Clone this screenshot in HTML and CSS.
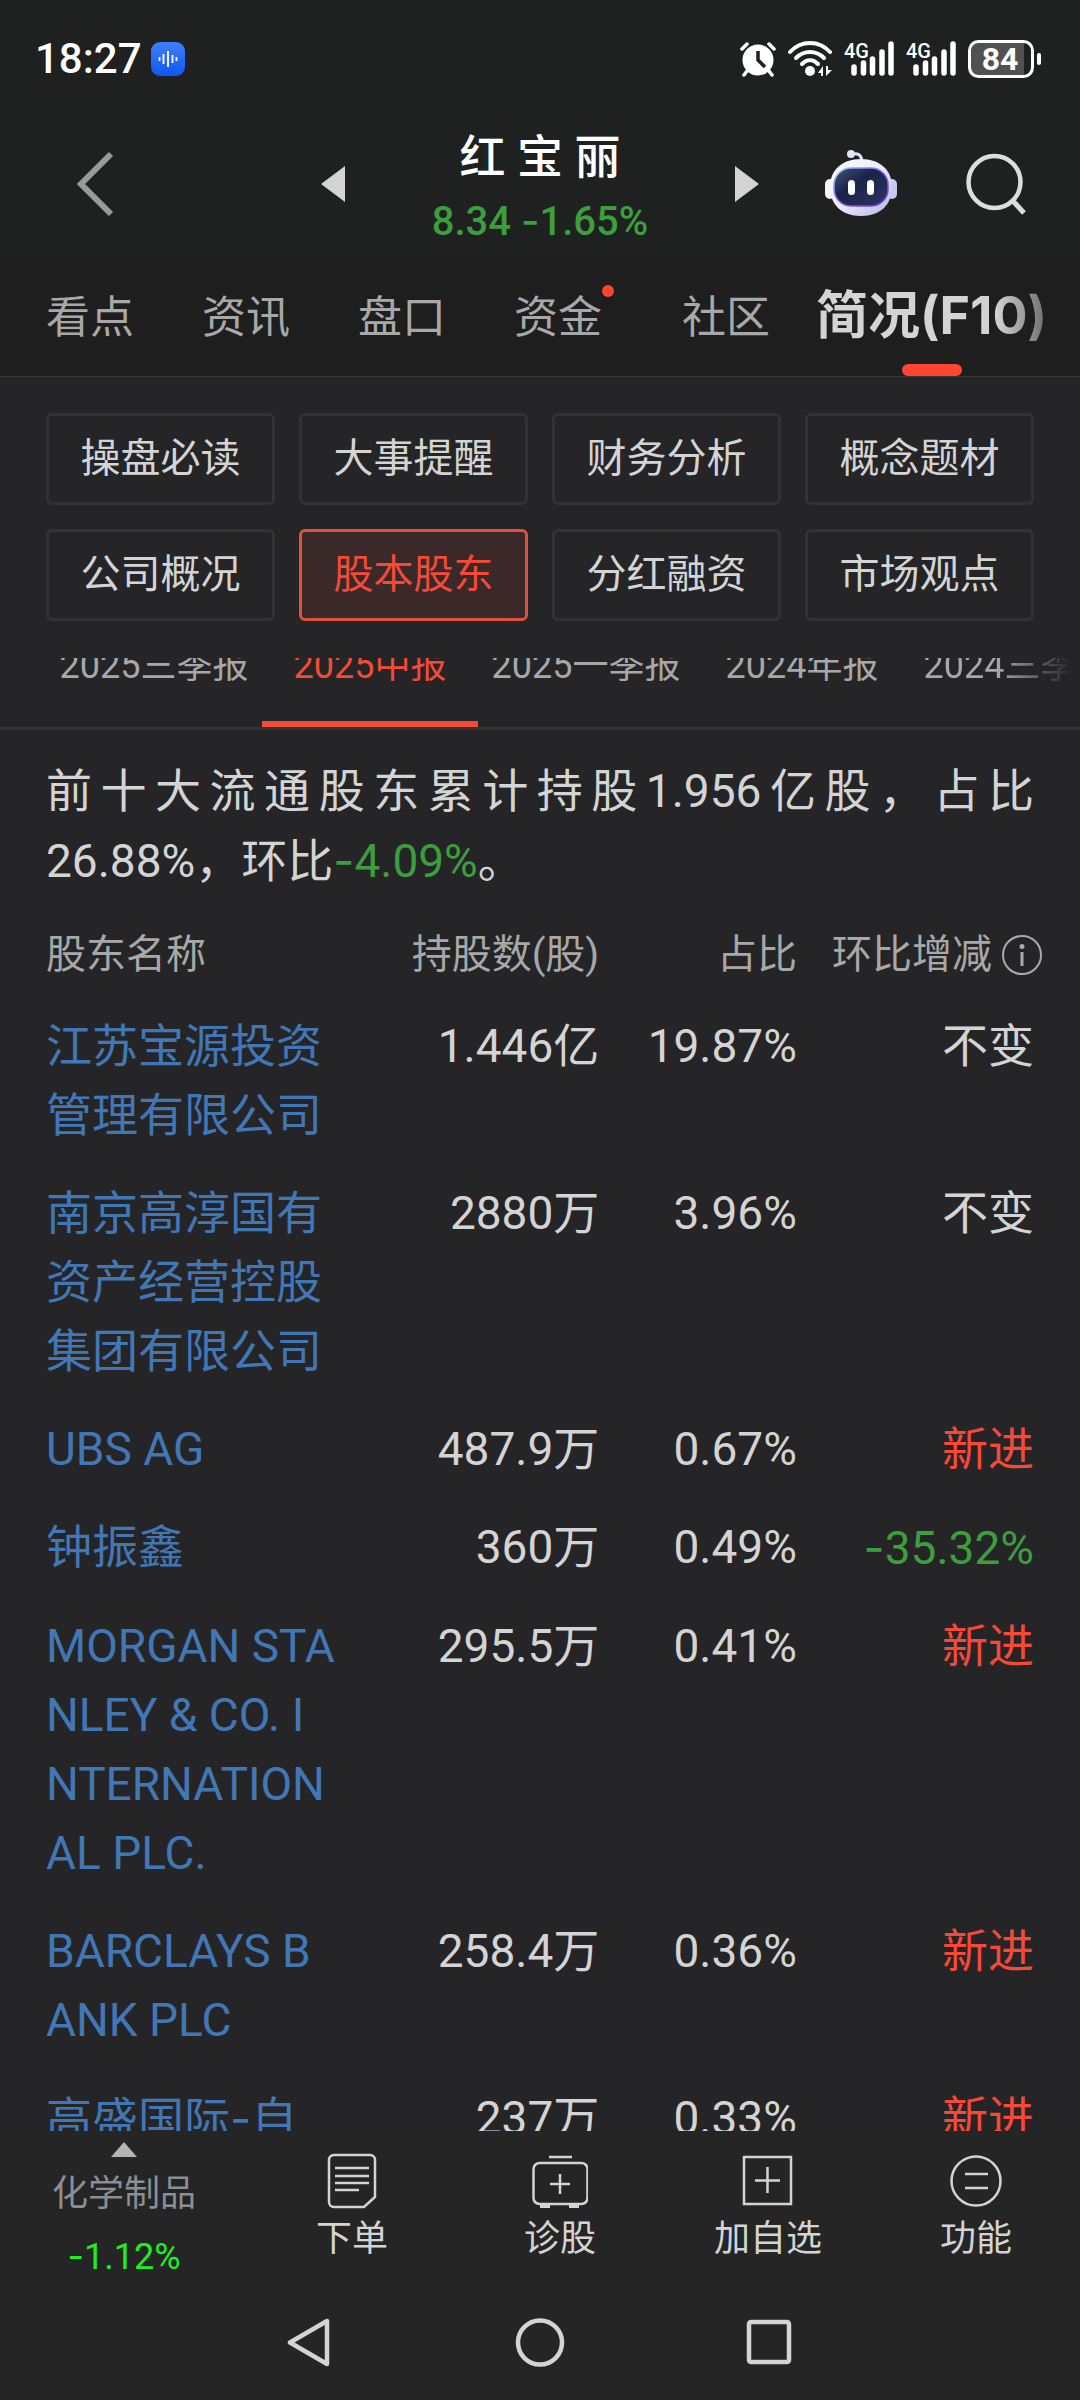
FILE: index.html
```html
<!DOCTYPE html>
<html lang="zh-CN">
<head>
<meta charset="utf-8">
<meta name="viewport" content="width=device-width">
<title>红宝丽 - 股本股东</title>
<link rel="stylesheet" href="styles.css">
</head>
<body>
<div class="top">
  <div class="status">
    <span class="clock">18:27</span>
    <svg class="voice" width="34" height="34" viewBox="0 0 34 34">
      <defs><linearGradient id="vg" x1="0" y1="0" x2="0" y2="1"><stop offset="0" stop-color="#3f7ff8"/><stop offset="1" stop-color="#0f57f0"/></linearGradient></defs>
      <rect width="34" height="34" rx="9" fill="url(#vg)"/>
      <path d="M8.500 15v4M12.500 12v10M17 9v16M21.500 13v8M25.500 15v4" stroke="#fff" stroke-width="1.800"/>
    </svg>
    <div class="signals">
      <svg width="36" height="36" viewBox="0 0 36 36">
        <circle cx="18" cy="19" r="15.500" fill="#fff"/>
        <path d="M2 8l5-5M34 8l-5-5M7 30l-3 4M29 30l3 4" stroke="#fff" stroke-width="3.500" stroke-linecap="round"/>
        <path d="M18 10v9l7 7" fill="none" stroke="#1f2121" stroke-width="3.500"/>
      </svg>
      <svg width="44" height="36" viewBox="0 0 44 36">
        <g fill="none" stroke="#fff" stroke-width="4" stroke-linecap="round">
          <path d="M2 11C13-1 31-1 42 11"/><path d="M8 17c8-8 20-8 28 0"/><path d="M14 23c5-5 11-5 16 0"/>
        </g>
        <circle cx="22" cy="30" r="5" fill="#fff"/>
        <path d="M35 25v10h-2v-3h-3zM38 25v10l6-6h-4v-4z" fill="#fff"/>
      </svg>
      <svg width="50" height="36" viewBox="0 0 50 36">
        <text class="net" x="0" y="17">4G</text>
        <path d="M10 26v6M19.500 22v10M28.500 18v14M38 11v21M47 3v29" stroke="#fff" stroke-width="5.500" stroke-linecap="round"/>
      </svg>
      <svg width="50" height="36" viewBox="0 0 50 36">
        <text class="net" x="0" y="17">4G</text>
        <path d="M10 26v6M19.500 22v10M28.500 18v14M38 11v21M47 3v29" stroke="#fff" stroke-width="5.500" stroke-linecap="round"/>
      </svg>
      <svg width="74" height="38" viewBox="0 0 74 38">
        <path d="M10 2h46v34H10a8 8 0 0 1-8-8V10a8 8 0 0 1 8-8z" fill="#505252"/>
        <rect x="1.500" y="1.500" width="63" height="35" rx="9" fill="none" stroke="#fff" stroke-width="3"/>
        <rect x="69" y="13" width="4" height="12" rx="2" fill="#fff"/>
        <text class="charge" x="32" y="30">84</text>
      </svg>
    </div>
  </div>
  <header class="bar">
    <button class="icon back" aria-label="返回"><svg width="40" height="66" viewBox="0 0 40 66"><path d="M37 3L7 33l30 30" fill="none" stroke="#999" stroke-width="6"/></svg></button>
    <div class="stock">
      <button class="icon" aria-label="上一只"><svg width="24" height="36" viewBox="0 0 24 36"><path d="M24 0v36L0 18z" fill="#d4d4d4"/></svg></button>
      <div class="quote">
        <h1>红 宝 丽</h1>
        <p class="down">8.34 <span class="sign">-</span>1.65%</p>
      </div>
      <button class="icon" aria-label="下一只"><svg width="24" height="36" viewBox="0 0 24 36"><path d="M0 0v36l24-18z" fill="#d4d4d4"/></svg></button>
    </div>
    <div class="tools">
      <button class="icon" aria-label="智能助手"><svg width="72" height="68" viewBox="0 0 72 68">
        <defs>
          <linearGradient id="head" x1="0" y1="0" x2="1" y2="1"><stop offset="0" stop-color="#fff"/><stop offset=".5" stop-color="#eceafb"/><stop offset="1" stop-color="#b4b1ea"/></linearGradient>
          <linearGradient id="rim" x1="0" y1="0" x2="1" y2="1"><stop offset="0" stop-color="#8fd8ff"/><stop offset=".5" stop-color="#8a5cf0"/><stop offset="1" stop-color="#6a3fd0"/></linearGradient>
          <linearGradient id="visor" x1="0" y1="0" x2="1" y2="1"><stop offset="0" stop-color="#47527c"/><stop offset=".4" stop-color="#1b2348"/><stop offset="1" stop-color="#2c3563"/></linearGradient>
        </defs>
        <path d="M27 4q9-2 10 7" fill="none" stroke="#e4e2fa" stroke-width="3"/>
        <circle cx="26" cy="4" r="4" fill="#e4e2fa"/>
        <rect x="0" y="29" width="10" height="20" rx="5" fill="#f3f2fd"/>
        <rect x="62" y="29" width="10" height="20" rx="5" fill="#c8c5f0"/>
        <path d="M36 9c19 0 31 11 31 28S56 66 36 66 5 54 5 37 17 9 36 9z" fill="url(#head)"/>
        <rect x="9" y="18" width="54" height="38" rx="17" fill="url(#visor)" stroke="url(#rim)" stroke-width="1.500"/>
        <rect x="23" y="30" width="7" height="15" rx="3.500" fill="#fff"/><rect x="42" y="30" width="7" height="15" rx="3.500" fill="#fff"/>
      </svg></button>
      <button class="icon" aria-label="搜索"><svg width="60" height="62" viewBox="0 0 60 62"><circle cx="28.500" cy="29" r="26" fill="none" stroke="#ddd" stroke-width="4.500"/><path d="M47 48l11 12" stroke="#ddd" stroke-width="5"/></svg></button>
    </div>
  </header>
</div>
<nav class="tabs">
  <a href="#">看点</a><a href="#">资讯</a><a href="#">盘口</a><a href="#" class="fresh"><span>资金</span></a><a href="#">社区</a><a href="#" class="current" aria-current="page">简况(F10)</a>
</nav>
<main>
  <div class="chips">
    <button>操盘必读</button><button>大事提醒</button><button>财务分析</button><button>概念题材</button>
    <button>公司概况</button><button class="on">股本股东</button><button>分红融资</button><button>市场观点</button>
  </div>
  <div class="periods">
    <button>2025三季报</button><button class="on">2025中报</button><button>2025一季报</button><button>2024年报</button><button>2024三季报</button>
  </div>
  <p class="summary">前十大流通股东累计持股1.956亿股，占比26.88%，环比<span class="down"><span class="sign">-</span>4.09%</span>。</p>
  <table>
    <colgroup><col><col class="c-shares"><col class="c-ratio"><col class="c-change"></colgroup>
    <thead><tr><th>股东名称</th><th>持股数(股)</th><th>占比</th><th><span class="hint">环比增减<svg width="40" height="40" viewBox="0 0 40 40"><circle cx="20" cy="20" r="19" fill="none" stroke="#aaa" stroke-width="2"/><circle cx="20" cy="11.500" r="2.500" fill="#aaa"/><path d="M20 17v14" stroke="#aaa" stroke-width="3"/></svg></span></th></tr></thead>
    <tbody>
      <tr><td><a href="#">江苏宝源投资管理有限公司</a></td><td>1.446亿</td><td>19.87%</td><td>不变</td></tr>
      <tr><td><a href="#">南京高淳国有资产经营控股集团有限公司</a></td><td>2880万</td><td>3.96%</td><td>不变</td></tr>
      <tr><td><a href="#">UBS AG</a></td><td>487.9万</td><td>0.67%</td><td class="new">新进</td></tr>
      <tr><td><a href="#">钟振鑫</a></td><td>360万</td><td>0.49%</td><td class="down"><span class="sign">-</span>35.32%</td></tr>
      <tr><td><a href="#">MORGAN STANLEY &amp; CO. INTERNATIONAL PLC.</a></td><td>295.5万</td><td>0.41%</td><td class="new">新进</td></tr>
      <tr><td><a href="#">BARCLAYS BANK PLC</a></td><td>258.4万</td><td>0.36%</td><td class="new">新进</td></tr>
      <tr><td><a href="#">高盛国际<span class="sign">-</span>自</a></td><td>237万</td><td>0.33%</td><td class="new">新进</td></tr>
    </tbody>
  </table>
</main>
<footer class="actions">
  <button class="sector">
    <svg width="26" height="15" viewBox="0 0 26 15"><path d="M13 0l13 15H0z" fill="#b4b4b4"/></svg>
    <span>化学制品</span><span class="drop"><span class="sign">-</span>1.12%</span>
  </button>
  <button><svg width="56" height="56" viewBox="0 0 56 56"><g fill="none" stroke="#d4d4d4" stroke-width="2.500"><path d="M10 2h36a5 5 0 0 1 5 5v37L40 54H10a5 5 0 0 1-5-5V7a5 5 0 0 1 5-5z"/><path d="M11 15h34M11 23h34M11 30h34M11 37h24"/></g></svg>下单</button>
  <button><svg width="56" height="56" viewBox="0 0 56 56"><g fill="none" stroke="#d4d4d4" stroke-width="2.500"><rect x="1.500" y="10" width="54" height="41" rx="6"/><path d="M17 4h23M28 21v20M18 31h20"/><path d="M8 53h10M37 53h10" stroke-width="4"/></g></svg>诊股</button>
  <button><svg width="56" height="56" viewBox="0 0 56 56"><g fill="none" stroke="#d4d4d4" stroke-width="2.500"><path d="M4 4h47v47H4zM27.500 14v26M15 27.500h25"/></g></svg>加自选</button>
  <button><svg width="56" height="56" viewBox="0 0 56 56"><g fill="none" stroke="#d4d4d4" stroke-width="2.500"><circle cx="28" cy="28" r="24.500"/><path d="M17 21h23M17 35h23"/></g></svg>功能</button>
</footer>
<nav class="system">
  <button class="icon" aria-label="后退"><svg width="50" height="50" viewBox="0 0 50 50"><path d="M42 3v43L5 24.500z" fill="none" stroke="#d4d4d4" stroke-width="4.500" stroke-linejoin="round"/></svg></button>
  <button class="icon" aria-label="主页"><svg width="50" height="50" viewBox="0 0 50 50"><circle cx="25" cy="24.500" r="22" fill="none" stroke="#d4d4d4" stroke-width="4.500"/></svg></button>
  <button class="icon" aria-label="最近任务"><svg width="50" height="50" viewBox="0 0 50 50"><rect x="4" y="4" width="40" height="40" rx="2" fill="none" stroke="#d4d4d4" stroke-width="4.500"/></svg></button>
</nav>
</body>
</html>
```
FILE: styles.css
```css
* { box-sizing: border-box; margin: 0; padding: 0; }
body {
  display: flex;
  flex-direction: column;
  height: 100vh;
  background: #252525;
  color: #d4d4d4;
  font-family: Roboto, "Noto Sans CJK SC", sans-serif;
  font-size: 46px;
}
button { background: none; border: 0; color: inherit; font: inherit; }
a { color: inherit; text-decoration: none; }
svg { display: block; flex: none; }
.sign { font-family: Inter, sans-serif; }
.down { color: #3c9e3c; }
.new { color: #f54a38; }

.top { background: #1f2121; }
.status {
  display: flex;
  align-items: center;
  height: 112px;
  padding: 6px 38px 0 35px;
}
.clock { color: #fff; font-size: 42px; font-weight: 500; line-height: 48px; }
.voice { margin-left: 9px; }
.signals { display: flex; align-items: center; gap: 12px; margin-left: auto; }
.net { fill: #fff; font-size: 20px; font-weight: 500; }
.charge { fill: #fff; font-size: 32px; font-weight: 700; text-anchor: middle; }

.bar {
  display: grid;
  grid-template-columns: 1fr auto 1fr;
  align-items: center;
  height: 144px;
}
.icon { display: flex; }
.back { padding-left: 74px; }
.stock { display: flex; align-items: center; }
.quote { width: 390px; padding-top: 10px; text-align: center; }
.quote h1 { color: #fff; font-size: 46px; font-weight: 500; line-height: 64px; }
.quote p { font-size: 40px; font-weight: 500; line-height: 64px; }
.tools { display: flex; align-items: center; justify-content: flex-end; gap: 69px; padding-right: 54px; }

.tabs {
  display: flex;
  height: 121px;
  padding-left: 12px;
  overflow: hidden;
  background: #1e1e1e;
  border-bottom: 1px solid #383838;
  color: #a8a8a8;
  font-size: 44px;
  line-height: 124px;
  white-space: nowrap;
  flex: none;
}
.tabs a { position: relative; flex: none; height: 120px; padding: 0 34px; }
.fresh span::after {
  content: "";
  position: absolute;
  top: 29px;
  right: 34px;
  width: 12px;
  height: 12px;
  border-radius: 6px;
  background: #ff4433;
}
.tabs .fresh { padding-right: 46px; }
.tabs .current {
  padding: 0 12px;
  font-size: 52px;
  font-weight: 700;
  font-family: Inter, "Noto Sans CJK SC", sans-serif;
  line-height: 120px;
  color: transparent;
  background: linear-gradient(90deg, #d4d4d4 75%, #555) text;
}
.tabs .current::after {
  content: "";
  position: absolute;
  left: 50%;
  bottom: 0;
  width: 60px;
  height: 12px;
  margin-left: -30px;
  border-radius: 6px;
  background: #ff4433;
}

main { flex: 1; min-height: 0; overflow: hidden; background: #252527; }
.chips {
  display: grid;
  grid-template-columns: repeat(4, 1fr);
  gap: 24px;
  padding: 36px 46px 37px;
}
.chips button {
  height: 92px;
  padding-bottom: 8px;
  border: 3px solid #333;
  border-radius: 6px;
  font-size: 40px;
}
.chips .on { border-color: #e04f40; background: #3b2828; color: #f54a38; }

.periods {
  display: flex;
  align-items: flex-end;
  height: 72px;
  padding-left: 46px;
  overflow: hidden;
  border-bottom: 3px solid #333;
  color: #a8a8a8;
  font-size: 36px;
}
.periods button {
  flex: none;
  width: 216px;
  height: 124px;
  border-bottom: 6px solid transparent;
  white-space: nowrap;
}
.periods .on { color: #f54a38; border-color: #f54a38; }
.periods button:last-child {
  color: transparent;
  background: linear-gradient(90deg, #a8a8a8 40%, #252527 75%) text;
}

.summary { padding: 27px 46px 17px; line-height: 69px; text-align: justify; }

table { width: calc(100% - 92px); margin: 0 46px; border-collapse: collapse; table-layout: fixed; }
.c-shares { width: 26%; }
.c-ratio { width: 20%; }
.c-change { width: 24%; }
th, td { padding: 14px 0 15px; text-align: right; vertical-align: top; line-height: 69px; white-space: nowrap; }
th { color: #a8a8a8; font-size: 40px; font-weight: 400; line-height: 56px; }
th:first-child, td:first-child { text-align: left; }
td a { display: block; width: 289px; color: #4277b6; white-space: normal; word-break: break-all; }
.hint { display: flex; align-items: center; justify-content: flex-end; gap: 10px; margin-right: -8px; }

.actions {
  display: grid;
  grid-template-columns: 248fr 208fr 208fr 208fr 208fr;
  height: 154px;
  flex: none;
  font-size: 36px;
}
.actions button { display: flex; flex-direction: column; align-items: center; gap: 2px; padding-top: 22px; line-height: 56px; }
.actions .sector { gap: 0; padding-top: 11px; color: #8a8f93; line-height: 62px; }
.actions .sector svg { margin-bottom: 6px; }
.actions .drop { color: #1fee1f; }

.system { display: flex; justify-content: center; align-items: center; gap: 180px; height: 115px; flex: none; }
```
